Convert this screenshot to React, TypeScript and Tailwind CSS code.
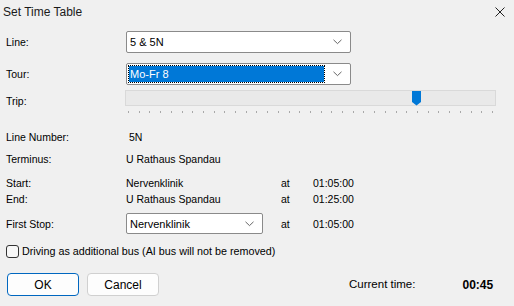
const font = "font-['Liberation_Sans',Arial,sans-serif]";

function Chevron() {
  return (
    <svg width="9" height="6" viewBox="0 0 9 6" className="shrink-0">
      <path d="M0.5 0.8 L4.5 4.6 L8.5 0.8" fill="none" stroke="#555" strokeWidth="0.9" />
    </svg>
  );
}

function Combo({ value, width, height = "h-[22px]", selected }: { value: string; width: string; height?: string; selected?: boolean }) {
  return (
    <div
      className={`${width} ${height} flex items-center justify-between bg-white border border-[#8a8a8a] rounded-[2px] pl-[2px] pr-[8px]`}
    >
      {selected ? (
        <div className="flex-1 mr-[9px] h-[16px] bg-[#0078d7] outline-1 outline-dotted outline-black text-white flex items-center pl-[1px] text-[11px]">
          {value}
        </div>
      ) : (
        <span className="pl-[1px] text-[11px] text-black">{value}</span>
      )}
      <Chevron />
    </div>
  );
}

function Slider() {
  const ticks = Array.from({ length: 35 }, (_, i) => i);
  return (
    <div className="w-[371px] flex flex-col">
      <div className="relative h-[16px] bg-[#e9e9e9] border border-[#d9d9d9]">
        <svg width="9" height="15" viewBox="0 0 9 15" className="absolute left-[286px] top-[0px]">
          <path d="M0 0 H9 V11 L4.5 14.5 L0 11 Z" fill="#0078d7" />
        </svg>
      </div>
      <div className="flex justify-between pl-[3px] pr-[3px] mt-[5px] h-[2px]">
        {ticks.map((t) => (
          <div key={t} className="w-px h-[2px] bg-[#a8a8a8]" />
        ))}
      </div>
    </div>
  );
}

function Row({ label, children, className = "" }: { label: string; children?: React.ReactNode; className?: string }) {
  return (
    <div className={`flex items-center leading-[14px] ${className}`}>
      <div className="w-[120px] shrink-0">{label}</div>
      {children}
    </div>
  );
}

export default function App() {
  return (
    <div className={`w-[514px] h-[306px] bg-[#f0f0f0] text-black ${font} overflow-hidden`}>
      <div className="h-[24px] flex items-center justify-between pl-[3px] pr-[9px]">
        <span className="text-[12px] text-[#1a1a1a]">Set Time Table</span>
        <svg width="10" height="10" viewBox="0 0 10 10">
          <path d="M0.5 0.5 L9.5 9.5 M9.5 0.5 L0.5 9.5" stroke="#222" strokeWidth="1" />
        </svg>
      </div>

      <div className="pl-[6px] text-[10.5px]">
        <Row label="Line:" className="mt-[7px]">
          <Combo value="5 & 5N" width="w-[225px]" />
        </Row>
        <Row label="Tour:" className="mt-[10px]">
          <Combo value="Mo-Fr 8" width="w-[225px]" selected />
        </Row>
        <div className="flex items-start mt-[5px]">
          <div className="w-[119px] shrink-0 pt-[4px] leading-[14px]">Trip:</div>
          <Slider />
        </div>

        <Row label="Line Number:" className="mt-[17px]">
          <span className="pl-[3px]">5N</span>
        </Row>
        <Row label="Terminus:" className="mt-[8px]">
          <span>U Rathaus Spandau</span>
        </Row>
        <Row label="Start:" className="mt-[10px]">
          <span className="w-[155px]">Nervenklinik</span>
          <span className="w-[32px]">at</span>
          <span>01:05:00</span>
        </Row>
        <Row label="End:" className="mt-[2px]">
          <span className="w-[155px]">U Rathaus Spandau</span>
          <span className="w-[32px]">at</span>
          <span>01:25:00</span>
        </Row>
        <Row label="First Stop:" className="mt-[7px]">
          <div className="w-[155px]">
            <Combo value="Nervenklinik" width="w-[137px]" height="h-[21px]" />
          </div>
          <span className="w-[32px]">at</span>
          <span>01:05:00</span>
        </Row>
      </div>

      <div className="flex items-center pl-[6px] mt-[10px] gap-[3px] h-[14px]">
        <div className="w-[13px] h-[13px] border border-[#333] rounded-[3px] bg-[#f7f7f7]" />
        <span className="text-[10.75px]">Driving as additional bus (AI bus will not be removed)</span>
      </div>

      <div className="flex items-center pl-[7px] mt-[15px]">
        <button className="w-[72px] h-[23px] rounded-[4px] border border-[#0067c0] bg-[#fdfdfd] text-[12px]">OK</button>
        <button className="ml-[8px] w-[72px] h-[23px] rounded-[4px] border border-[#d0d0d0] bg-[#fdfdfd] text-[12px]">
          Cancel
        </button>
        <span className="ml-[190px] text-[11.5px]">Current time:</span>
        <span className="ml-[47px] text-[12px] font-bold">00:45</span>
      </div>
    </div>
  );
}
